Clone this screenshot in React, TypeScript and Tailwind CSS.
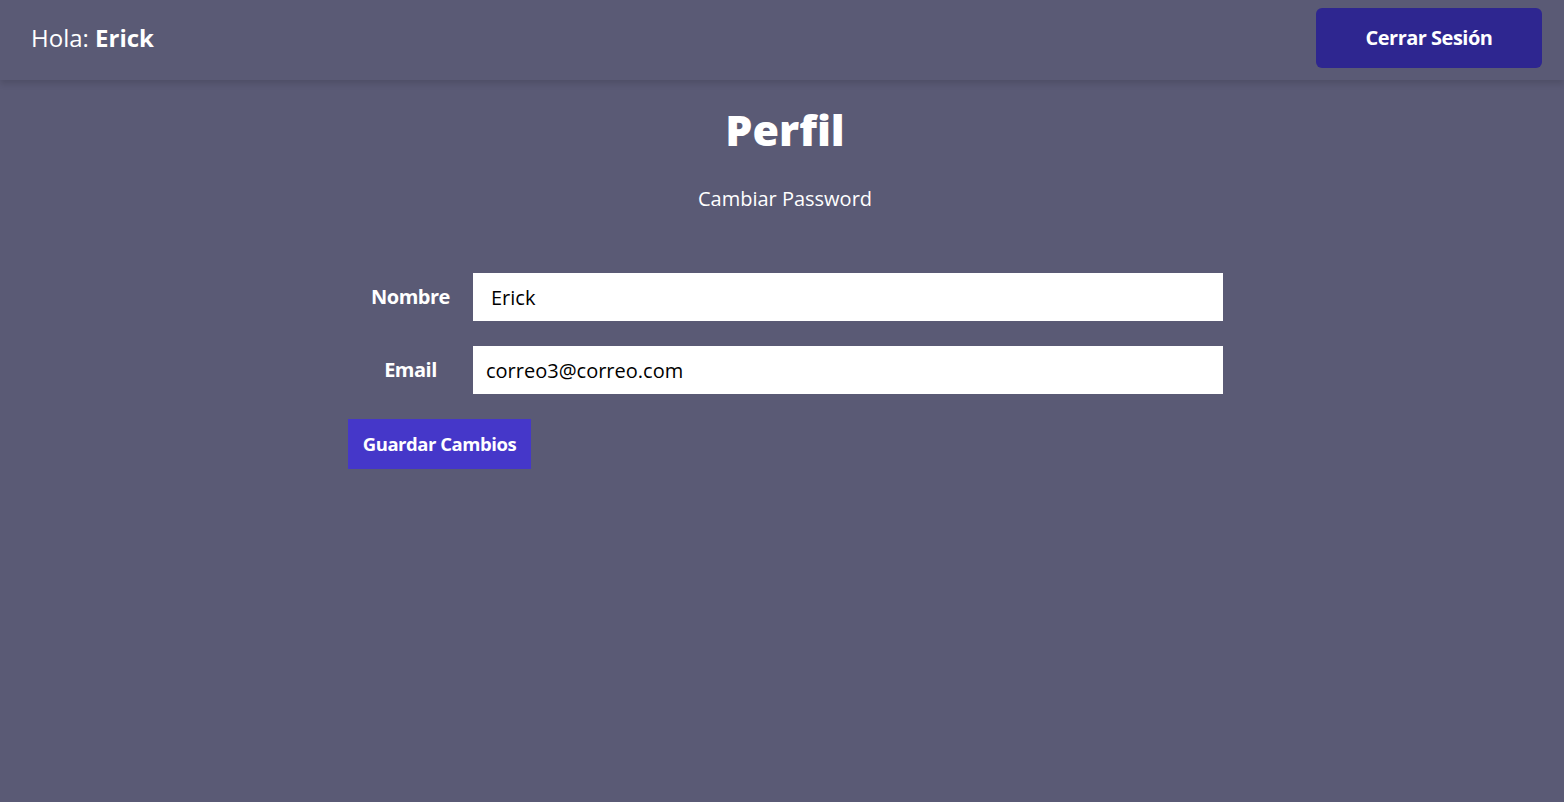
export default function App() {
  return (
    <div className="min-h-screen bg-[#5a5a75] text-white font-['Open_Sans',sans-serif]">
      <header className="flex items-center justify-between h-20 pb-1 pl-[31px] pr-[22px] shadow-[0_4px_6px_rgba(0,0,0,0.12)]">
        <p className="text-[24px]">
          Hola: <span className="font-bold">Erick</span>
        </p>
        <button className="w-[226px] h-[60px] rounded-md bg-[#2e2690] text-[20px] font-bold tracking-tight">
          Cerrar Sesión
        </button>
      </header>

      <main>
        <h1 className="mt-[22px] text-center text-[43px] leading-[56px] font-black pl-[6px]">Perfil</h1>
        <p className="mt-[26px] text-center text-[20px] pl-[6px]">Cambiar Password</p>

        <form className="mx-auto mt-[59px] w-[882px] pl-[7px] flex flex-col gap-[25px]">
          <div className="flex items-center">
            <label className="w-[125px] text-center text-[20px] font-bold tracking-tight">Nombre</label>
            <input
              className="w-[750px] h-12 bg-white px-[18px] text-[20px] text-black outline-none"
              defaultValue="Erick"
            />
          </div>
          <div className="flex items-center">
            <label className="w-[125px] text-center text-[20px] font-bold tracking-tight">Email</label>
            <input
              className="w-[750px] h-12 bg-white px-[13px] text-[20px] text-black outline-none"
              defaultValue="correo3@correo.com"
            />
          </div>
          <div>
            <button type="button" className="h-[50px] w-[183px] bg-[#4537c9] text-[18.5px] font-bold tracking-tight">
              Guardar Cambios
            </button>
          </div>
        </form>
      </main>
    </div>
  )
}
